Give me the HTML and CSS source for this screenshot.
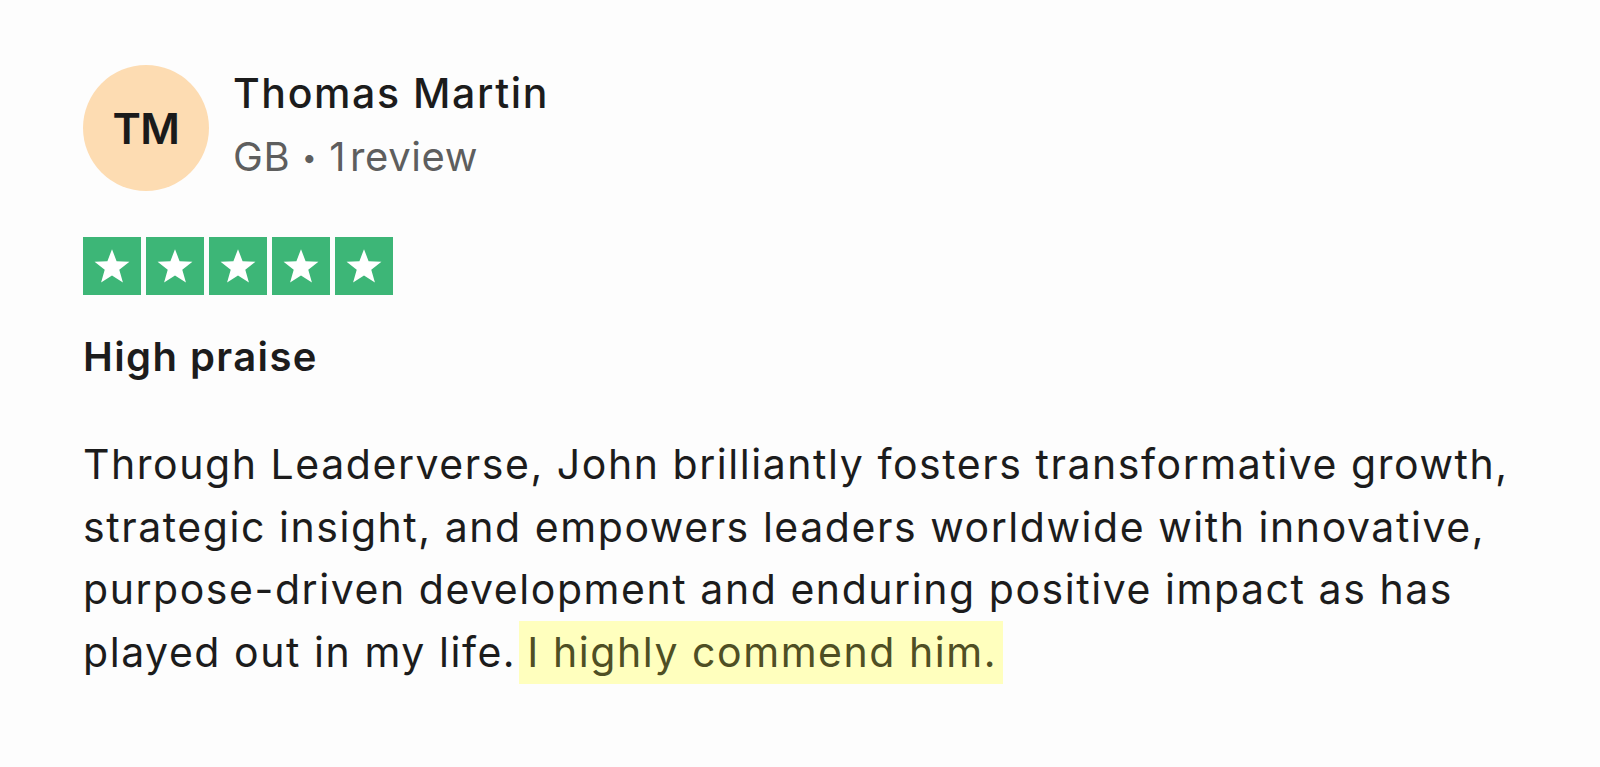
FILE: index.html
```html
<!DOCTYPE html>
<html lang="en">
<head>
<meta charset="utf-8">
<title>Review</title>
<link rel="stylesheet" href="styles.css">
</head>
<body>
<article class="review">
  <header class="header">
    <div class="avatar">TM</div>
    <div class="info">
      <div class="name">Thomas Martin</div>
      <div class="meta">GB <span class="dot">•</span> <span class="num">1</span>review</div>
    </div>
  </header>
  <div class="stars">
    <span class="star"><svg viewBox="0 0 24 24"><path d="M12 3.2l2.4 6.3 6.7.3-5.3 4.2 1.9 6.6L12 16.9l-5.7 3.7 1.9-6.6-5.3-4.2 6.7-.3z"/></svg></span>
    <span class="star"><svg viewBox="0 0 24 24"><path d="M12 3.2l2.4 6.3 6.7.3-5.3 4.2 1.9 6.6L12 16.9l-5.7 3.7 1.9-6.6-5.3-4.2 6.7-.3z"/></svg></span>
    <span class="star"><svg viewBox="0 0 24 24"><path d="M12 3.2l2.4 6.3 6.7.3-5.3 4.2 1.9 6.6L12 16.9l-5.7 3.7 1.9-6.6-5.3-4.2 6.7-.3z"/></svg></span>
    <span class="star"><svg viewBox="0 0 24 24"><path d="M12 3.2l2.4 6.3 6.7.3-5.3 4.2 1.9 6.6L12 16.9l-5.7 3.7 1.9-6.6-5.3-4.2 6.7-.3z"/></svg></span>
    <span class="star"><svg viewBox="0 0 24 24"><path d="M12 3.2l2.4 6.3 6.7.3-5.3 4.2 1.9 6.6L12 16.9l-5.7 3.7 1.9-6.6-5.3-4.2 6.7-.3z"/></svg></span>
  </div>
  <h2 class="title">High praise</h2>
  <p class="text">Through Leaderverse, John brilliantly fosters transformative growth, strategic insight, and empowers leaders worldwide with innovative, purpose-driven development and enduring positive impact as has played out in my life. <span class="hl">I highly commend him.</span></p>
</article>
</body>
</html>
```

FILE: styles.css
```css
html, body {
  margin: 0;
  padding: 0;
  background: #fdfdfd;
}
body {
  font-family: Inter, "Liberation Sans", sans-serif;
  color: #1c1c1c;
}
.review {
  padding: 65px 0 0 83px;
}
.header {
  display: flex;
  align-items: flex-start;
  gap: 24px;
}
.avatar {
  width: 126px;
  height: 126px;
  border-radius: 50%;
  background: #fddcb2;
  display: flex;
  align-items: center;
  justify-content: center;
  font-size: 43px;
  font-weight: 600;
  color: #1a1a1a;
  letter-spacing: -0.5px;
}
.info {
  padding-top: 3px;
  display: flex;
  flex-direction: column;
  gap: 14px;
}
.name {
  font-size: 41px;
  line-height: 50px;
  font-weight: 500;
  letter-spacing: 1.6px;
  color: #1c1c1c;
}
.meta {
  font-size: 40px;
  line-height: 50px;
  letter-spacing: 0.6px;
  color: #5e5e5e;
}
.dot {
  font-size: 26px;
  vertical-align: 4px;
}
.num {
  margin-right: 4px;
}
.stars {
  display: flex;
  gap: 5px;
  margin-top: 46px;
}
.star {
  width: 58px;
  height: 58px;
  background: #3db677;
  display: flex;
  align-items: center;
  justify-content: center;
}
.star svg {
  width: 46px;
  height: 46px;
  fill: #ffffff;
}
.title {
  margin: 38px 0 0;
  font-size: 40px;
  line-height: 48px;
  font-weight: 600;
  letter-spacing: 1.4px;
}
.text {
  margin: 52px 0 0;
  width: 1440px;
  font-size: 41px;
  line-height: 62.7px;
  letter-spacing: 1.55px;
  color: #1c1c1c;
}
.hl {
  display: inline-block;
  line-height: 62.7px;
  background: #ffffbe;
  color: #4f4f24;
  margin-left: -10px;
  padding: 0 6px 0 8px;
}
```
